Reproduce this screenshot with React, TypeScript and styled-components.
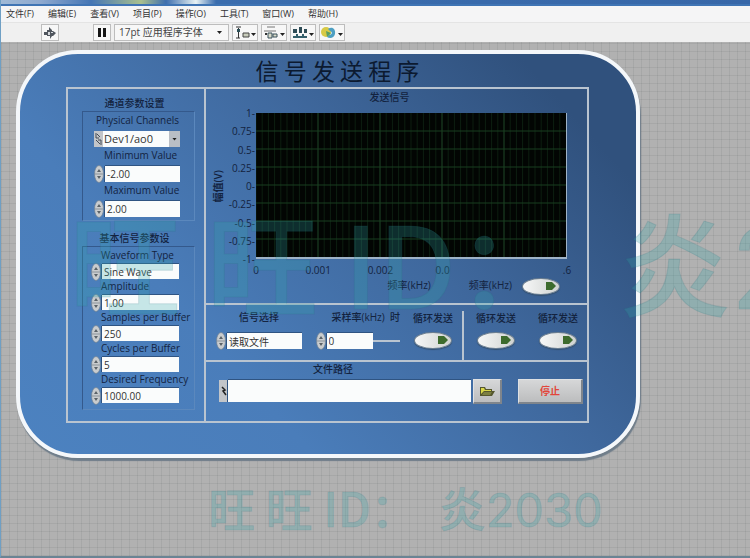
import React, { useId } from "react";
import styled, { createGlobalStyle } from "styled-components";

const sans = `"Open Sans", "Noto Sans CJK SC", sans-serif`;
const cjk = `"Noto Sans CJK SC", sans-serif`;
const rule = "#b9c4d0";
const ink = "#13233f";

const GlobalStyle = createGlobalStyle`
  * { box-sizing: border-box; }
  html, body, #root { height: 100%; }
  body { margin: 0; font: 10px/14px ${sans}; color: ${ink}; }
  button, input, select { font: inherit; color: inherit; margin: 0; padding: 0; border: 0; border-radius: 0; }
`;

const Window = styled.div`
  position: relative;
  display: flex;
  flex-direction: column;
  min-height: 100%;
  overflow: hidden;
  border-left: 1px solid #6f9fc4;
  border-bottom: 2px solid #6a8494;
  background-color: #b1b1b1;
  background-image:
    repeating-linear-gradient(90deg, rgba(60, 70, 70, 0.09) 0 1px, transparent 1px 8px),
    repeating-linear-gradient(0deg, rgba(60, 70, 70, 0.09) 0 1px, transparent 1px 8px);
`;

const TitleStrip = styled.div`
  height: 6px;
  background: linear-gradient(90deg, #9fb9d6 0, #8ea9cf 40px, #4475b4 90px, #a9c08e 140px, #3f6fae 165px, #e8f2f4 195px, #3b6dae 215px, #3767a8 100%);
  border-bottom: 2px solid #3f74b4;
`;

const MenuBar = styled.nav`
  display: flex;
  gap: 14px;
  height: 16px;
  padding-left: 5px;
  background: #f5f5f6;
`;

const MenuItem = styled.button`
  background: none;
  font-size: 9px;
  line-height: 16px;
  white-space: nowrap;
  color: #333;
`;

const Toolbar = styled.div`
  display: flex;
  align-items: center;
  gap: 3px;
  height: 20px;
  padding-left: 40px;
  background: #f0f0f0;
  border-top: 1px solid #e4e4e4;
`;

const ToolButton = styled.button<{ $wide?: boolean; $gapAfter?: boolean }>`
  display: flex;
  align-items: center;
  justify-content: center;
  width: ${(p) => (p.$wide ? 26 : 18)}px;
  height: 17px;
  margin-right: ${(p) => (p.$gapAfter ? 31 : 0)}px;
  background: #f7f7f7;
  border: 1px solid #bdbdbd;
`;

const FontBox = styled.div`
  display: flex;
  align-items: center;
  width: 115px;
  height: 17px;
  background: #f7f7f7;
  border: 1px solid #bdbdbd;
`;

const FontSelect = styled.select`
  flex: 1;
  min-width: 0;
  padding-left: 4px;
  appearance: none;
  background: none;
  line-height: 15px;
  color: #444;
`;

const Arrow = styled.span`
  width: 5px;
  height: 3px;
  margin-right: 6px;
  background: #222;
  clip-path: polygon(0 0, 100% 0, 50% 100%);
`;

const Panel = styled.main`
  margin: 8px 110px 0 15px;
  padding: 0 47px 31px 46px;
  border: 4px solid #f4f7fa;
  border-radius: 62px;
  background: linear-gradient(48deg, #4c82c0 0%, #4a7dba 30%, #3f689d 60%, #30517d 88%);
  box-shadow: 1px 3px 1px #6f7d8a;
`;

const Title = styled.h1`
  margin: 0;
  padding-left: 20px;
  font: 400 23px/33px ${cjk};
  text-align: center;
  color: #0c1a30;
  white-space: nowrap;
`;

const Board = styled.div`
  display: grid;
  grid-template-columns: 138px minmax(0, 1fr);
  border: 2px solid ${rule};
`;

const Side = styled.aside`
  padding: 0 9px 0 14px;
  border-right: 2px solid ${rule};
`;

const Group = styled.section`
  padding-top: 6px;
  & + & { padding-top: 9px; }
`;

const GroupTitle = styled.h2`
  margin: 0;
  padding-right: 8px;
  font: 500 10px/16px ${cjk};
  text-align: center;
  color: ${ink};
`;

const Frame = styled.div<{ $tall?: boolean }>`
  padding: ${(p) => (p.$tall ? "1px 15px 6px 8px" : "0 14px 3px 11px")};
  border: 1px solid #34598c;
  border-right-color: #5b88bd;
  border-bottom-color: #5b88bd;
`;

const FieldLabel = styled.label<{ $tall?: boolean }>`
  display: block;
  margin: ${(p) => (p.$tall ? "0 -12px 2px 10px" : "0 -8px 3px 2px")};
  line-height: ${(p) => (p.$tall ? 14 : 16)}px;
  white-space: nowrap;
`;

const ShiftedLabel = styled(FieldLabel)`
  padding-left: 8px;
`;

const Control = styled.div<{ $h: number }>`
  display: flex;
  align-items: center;
  height: ${(p) => p.$h}px;
`;

const SpinShape = styled.svg`
  flex: none;
  width: 11px;
  height: 18px;
`;

const TextBox = styled.input`
  flex: 1;
  min-width: 0;
  height: 100%;
  padding-left: 2px;
  background: #fafcfc;
  box-shadow: 0 -1px 0 #2f5482, -1px 0 0 #2f5482;
  font-size: 10px;
  color: #333;
`;

const ChannelSelect = styled.select`
  flex: 1;
  min-width: 0;
  height: 100%;
  padding-left: 1px;
  appearance: none;
  background: #fafcfc;
  font-size: 11px;
  color: #333;
`;

const DropMark = styled.span`
  display: flex;
  align-items: center;
  justify-content: center;
  width: 11px;
  height: 100%;
  background: #b9bec5;
  & > span { margin: 0; }
`;

const Tag = styled.svg`
  flex: none;
  width: 9px;
  height: 100%;
  background: #c2c5c9;
`;

const Main = styled.div`
  display: flex;
  flex-direction: column;
`;

const ChartArea = styled.section`
  display: grid;
  grid-template-columns: 24px 26px minmax(0, 1fr) 20px;
  grid-template-rows: 24px 146px 19px 25px;
  border-bottom: 2px solid ${rule};
`;

const ChartTitle = styled.h2`
  grid-column: 1 / -1;
  margin: 0;
  padding-right: 14px;
  font: 500 10px/16px ${cjk};
  text-align: center;
`;

const YName = styled.div`
  align-self: center;
  justify-self: center;
  writing-mode: vertical-rl;
  text-orientation: sideways;
  transform: rotate(180deg);
  font-weight: 600;
  white-space: nowrap;
`;

const YTicks = styled.div`
  display: flex;
  flex-direction: column;
  justify-content: space-between;
  margin: -7px 0 -7px -6px;
  padding-right: 1px;
  text-align: right;
`;

const Plot = styled.svg`
  display: block;
  width: 100%;
  height: 100%;
  background: #020503;
  border-right: 1px solid #9fb3c8;
  border-bottom: 2px solid #9fb3c8;
  overflow: hidden;
`;

const XTicks = styled.div`
  grid-column: 3;
  display: grid;
  grid-template-columns: repeat(6, 1fr);
  margin: 4px -10%;
  text-align: center;
`;

const ChartFoot = styled.div`
  grid-column: 3 / 5;
  display: flex;
  align-items: flex-start;
  justify-content: flex-end;
  padding-right: 27px;
  white-space: nowrap;
`;

const AxisName = styled.span<{ $space: number }>`
  margin-right: ${(p) => p.$space}px;
`;

const ToggleBox = styled.input`
  display: block;
  width: 38px;
  height: 17px;
  appearance: none;
  border: 1px solid #6d7f90;
  border-radius: 50%;
  background: linear-gradient(90deg, #f6f7f7, #d0d3d1);
  box-shadow: 0 1px 1px #34506f;
  &::after {
    content: "";
    display: block;
    width: 10px;
    height: 8px;
    margin: 3px 0 0 23px;
    background: #3d6b2d;
    clip-path: polygon(0 0, 60% 0, 100% 50%, 60% 100%, 0 100%);
  }
`;

const Settings = styled.section`
  display: flex;
  height: 57px;
  border-bottom: 2px solid ${rule};
`;

const SettingsPart = styled.div<{ $grow?: boolean }>`
  display: flex;
  flex: ${(p) => (p.$grow ? "1 1 0" : "0 0 auto")};
  justify-content: space-between;
  padding: ${(p) => (p.$grow ? "4px 9px 0 10px" : "4px 9px 0 12px")};
`;

const Divider = styled.span`
  width: 2px;
  margin-top: 6px;
  background: ${rule};
`;

const Stack = styled.div<{ $w: number }>`
  width: ${(p) => p.$w}px;
`;

const TopLabel = styled.label<{ $left?: boolean }>`
  display: block;
  margin-bottom: 8px;
  font-weight: 500;
  line-height: 16px;
  text-align: ${(p) => (p.$left ? "left" : "center")};
  padding-left: ${(p) => (p.$left ? 16 : 0)}px;
  white-space: nowrap;
`;

const ToggleStack = styled.div<{ $space?: boolean }>`
  display: flex;
  flex-direction: column;
  align-items: center;
  width: 40px;
  margin-left: ${(p) => (p.$space ? 22 : 0)}px;
  & > label { margin-bottom: 6px; padding: 1px 0 0; line-height: 16px; font-weight: 500; white-space: nowrap; }
`;

const Lead = styled.span`
  width: 27px;
  height: 2px;
  background: ${rule};
`;

const FileArea = styled.section`
  height: 59px;
  padding: 0 4px 0 13px;
`;

const PathLabel = styled.label`
  display: block;
  padding: 0 136px 0 0;
  line-height: 14px;
  text-align: center;
  font-weight: 500;
`;

const PathRow = styled.div`
  display: flex;
  align-items: center;
  height: 24px;
  margin-top: 3px;
`;

const PathBox = styled.div`
  display: flex;
  flex: 1;
  height: 22px;
  margin-right: 2px;
`;

const MetalButton = styled.button<{ $w: number }>`
  display: flex;
  align-items: center;
  justify-content: center;
  width: ${(p) => p.$w}px;
  height: 25px;
  background: linear-gradient(#d6d7d8, #bcbdbe);
  border: 1px solid #dfe1e3;
  border-right: 2px solid #7f858c;
  border-bottom: 2px solid #7f858c;
  color: #e2453a;
  font-weight: 600;
  & + & { margin-left: 16px; }
`;

const Mark = styled.div<{ $size: number; $x: number; $y: number }>`
  position: absolute;
  left: ${(p) => p.$x}px;
  top: ${(p) => p.$y}px;
  font: 500 ${(p) => p.$size}px/1 ${cjk};
  color: rgba(50, 165, 170, 0.26);
  -webkit-text-stroke: 1px rgba(40, 110, 125, 0.16);
  white-space: pre;
  pointer-events: none;
  user-select: none;
`;

const MarkDigits = styled.span`
  font-family: Inter, sans-serif;
  font-weight: 400;
`;

function Spinner() {
  return (
    <SpinShape viewBox="0 0 11 18" aria-hidden="true">
      <ellipse cx="5" cy="9" rx="4.5" ry="8.5" fill="#c9ccce" stroke="#6d7f93" strokeWidth="0.7" />
      <path d="M1 9h8" stroke="#8c949b" />
      <path d="M3 7l2-3 2 3zM3 11l2 3 2-3z" fill="#5b6268" />
    </SpinShape>
  );
}

function Field({ label, value, tall }: { label: string; value: string; tall?: boolean }) {
  const id = useId();
  const Label = tall ? FieldLabel : ShiftedLabel;
  return (
    <>
      <Label htmlFor={id} $tall={tall}>{label}</Label>
      <Control $h={tall ? 15 : 16}>
        <Spinner />
        <TextBox id={id} defaultValue={value} />
      </Control>
    </>
  );
}

function Toggle({ label, space }: { label: string; space?: boolean }) {
  const id = useId();
  return (
    <ToggleStack $space={space}>
      <label htmlFor={id}>{label}</label>
      <ToggleBox id={id} type="checkbox" />
    </ToggleStack>
  );
}

function ChartGrid() {
  const minor = Array.from({ length: 50 }, (_, i) => i * 6.2);
  return (
    <Plot viewBox="0 0 310 146" preserveAspectRatio="none" role="img" aria-label="发送信号">
      {minor.map((x) => (
        <path key={x} d={`M${x} 0V146`} stroke="#0d1f11" />
      ))}
      {[62, 124, 186, 248].map((x) => (
        <path key={x} d={`M${x} 0V146`} stroke="#1a3d22" />
      ))}
      {[1, 2, 3, 4, 5, 6, 7].map((n) => (
        <path key={n} d={`M0 ${n * 18.25}H310`} stroke="#183f21" strokeWidth="1.2" />
      ))}
    </Plot>
  );
}

const caret = <path d="M18 7h5l-2.500 3z" fill="#222" />;

function Watermark({ size, x, y }: { size: number; x: number; y: number }) {
  return (
    <Mark $size={size} $x={x} $y={y} aria-hidden="true">
      {"旺 旺 ID：  炎"}
      <MarkDigits>2030</MarkDigits>
    </Mark>
  );
}

export default function App() {
  return (
    <>
      <GlobalStyle />
      <Window>
        <TitleStrip />
        <MenuBar>
          {["文件(F)", "编辑(E)", "查看(V)", "项目(P)", "操作(O)", "工具(T)", "窗口(W)", "帮助(H)"].map((m) => (
            <MenuItem key={m}>{m}</MenuItem>
          ))}
        </MenuBar>
        <Toolbar>
          <ToolButton aria-label="运行" $gapAfter>
            <svg width="12" height="12" viewBox="0 0 12 12">
              <path d="M0 5h3V3h2V0l3 3v1h1l3 2-3 3H8L6 12V9H3V8H0z" fill="#50565e" />
              <path d="M4 5h2v3H4zM7 5h2v1H7z" fill="#d5d8dc" />
            </svg>
          </ToolButton>
          <ToolButton aria-label="暂停">
            <svg width="8" height="9" viewBox="0 0 8 9"><path d="M0 0h3v9H0zM5 0h3v9H5z" fill="#151515" /></svg>
          </ToolButton>
          <FontBox>
            <FontSelect aria-label="字体"><option>17pt 应用程序字体</option></FontSelect>
            <Arrow />
          </FontBox>
          <ToolButton aria-label="对齐" $wide>
            <svg width="24" height="14" viewBox="0 0 24 14">
              <path d="M3 1h5M5.500 2v10M3 12h4" stroke="#333" />
              <path d="M4 3h3v3H4z" fill="#2c4f57" />
              <path d="M10 7h6v4h-6z" fill="#c8ccbb" stroke="#444" />
              {caret}
            </svg>
          </ToolButton>
          <ToolButton aria-label="分布" $wide>
            <svg width="24" height="14" viewBox="0 0 24 14">
              <path d="M5 1h8M2 5h12" stroke="#777" />
              <path d="M6 7h4v5H6zM11 8h4v3h-4z" fill="#dadccb" stroke="#38515a" />
              <path d="M3 8h2" stroke="#333" strokeWidth="2" />
              {caret}
            </svg>
          </ToolButton>
          <ToolButton aria-label="调整大小" $wide>
            <svg width="24" height="14" viewBox="0 0 24 14">
              <path d="M2 3h4v4H2zM8 1h3v6H8zM13 3h3v4h-3z" fill="#2e4c56" />
              <path d="M2 11h14M6 8v3M12 8v3" stroke="#335f6b" strokeWidth="2" />
              {caret}
            </svg>
          </ToolButton>
          <ToolButton aria-label="重新排序" $wide>
            <svg width="24" height="14" viewBox="0 0 24 14">
              <circle cx="6" cy="6" r="5" fill="#d8ca45" />
              <path d="M8 3c4-3 8 0 7 5-1 4-5 5-8 3l2-2c3 0 4-3 1-4z" fill="#4d9fc2" />
              <path d="M6 5l5 2-4 4z" fill="#5a9e62" />
              {caret}
            </svg>
          </ToolButton>
        </Toolbar>

        <Panel>
          <Title>信 号 发 送 程 序</Title>
          <Board>
            <Side>
              <Group>
                <GroupTitle>通道参数设置</GroupTitle>
                <Frame>
                  <FieldLabel htmlFor="channel">Physical Channels</FieldLabel>
                  <Control $h={16}>
                    <Tag viewBox="0 0 9 16">
                      <path d="M2 2v5h3M3 3l3 3M4 9h3v5M2 9l4 4" stroke="#434b55" fill="none" />
                    </Tag>
                    <ChannelSelect id="channel"><option>Dev1/ao0</option></ChannelSelect>
                    <DropMark><Arrow /></DropMark>
                  </Control>
                  <Field label="Minimum Value" value="-2.00" />
                  <Field label="Maximum Value" value="2.00" />
                </Frame>
              </Group>
              <Group>
                <GroupTitle>基本信号参数设</GroupTitle>
                <Frame $tall>
                  <Field tall label="Waveform Type" value="Sine Wave" />
                  <Field tall label="Amplitude" value="1.00" />
                  <Field tall label="Samples per Buffer" value="250" />
                  <Field tall label="Cycles per Buffer" value="5" />
                  <Field tall label="Desired Frequency" value="1000.00" />
                </Frame>
              </Group>
            </Side>

            <Main>
              <ChartArea>
                <ChartTitle>发送信号</ChartTitle>
                <YName>幅值(V)</YName>
                <YTicks>
                  {["1", "0.75", "0.5", "0.25", "0", "-0.25", "-0.5", "-0.75", "-1"].map((t) => (
                    <span key={t}>{t}-</span>
                  ))}
                </YTicks>
                <ChartGrid />
                <span />
                <XTicks>
                  {["0", "0.001", "0.002", "0.0", "", ".6"].map((t, i) => (
                    <span key={i}>{t}</span>
                  ))}
                </XTicks>
                <ChartFoot>
                  <AxisName $space={38}>频率(kHz)</AxisName>
                  <AxisName $space={10}>频率(kHz)</AxisName>
                  <ToggleBox type="checkbox" aria-label="频率(kHz)" />
                </ChartFoot>
              </ChartArea>

              <Settings>
                <SettingsPart $grow>
                  <Stack $w={86}>
                    <TopLabel htmlFor="signal">信号选择</TopLabel>
                    <Control $h={16}>
                      <Spinner />
                      <TextBox id="signal" defaultValue="读取文件" />
                    </Control>
                  </Stack>
                  <Stack $w={84}>
                    <TopLabel htmlFor="rate" $left>采样率(kHz)&nbsp; 时</TopLabel>
                    <Control $h={16}>
                      <Spinner />
                      <TextBox id="rate" defaultValue="0" />
                      <Lead />
                    </Control>
                  </Stack>
                  <Toggle label="循环发送" />
                </SettingsPart>
                <Divider />
                <SettingsPart>
                  <Toggle label="循环发送" />
                  <Toggle label="循环发送" space />
                </SettingsPart>
              </Settings>

              <FileArea>
                <PathLabel htmlFor="path">文件路径</PathLabel>
                <PathRow>
                  <PathBox>
                    <Tag viewBox="0 0 9 22">
                      <path d="M3 7l3 3-2 1 3 4" stroke="#222" strokeWidth="1.500" fill="none" />
                    </Tag>
                    <TextBox id="path" />
                  </PathBox>
                  <MetalButton $w={29} aria-label="浏览">
                    <svg width="17" height="12" viewBox="0 0 17 12">
                      <path d="M1 2h5l1 2h6v2h3l-3 5H1z" fill="#55572e" />
                      <path d="M2 3h3l1 2h6v1H5L2 9z" fill="#d9d74a" />
                      <path d="M5 7h8l-2 3H3z" fill="#7c8040" />
                    </svg>
                  </MetalButton>
                  <MetalButton $w={65}>停止</MetalButton>
                </PathRow>
              </FileArea>
            </Main>
          </Board>
        </Panel>

        <Watermark size={112} x={68} y={204} />
        <Watermark size={47} x={207} y={483} />
      </Window>
    </>
  );
}
